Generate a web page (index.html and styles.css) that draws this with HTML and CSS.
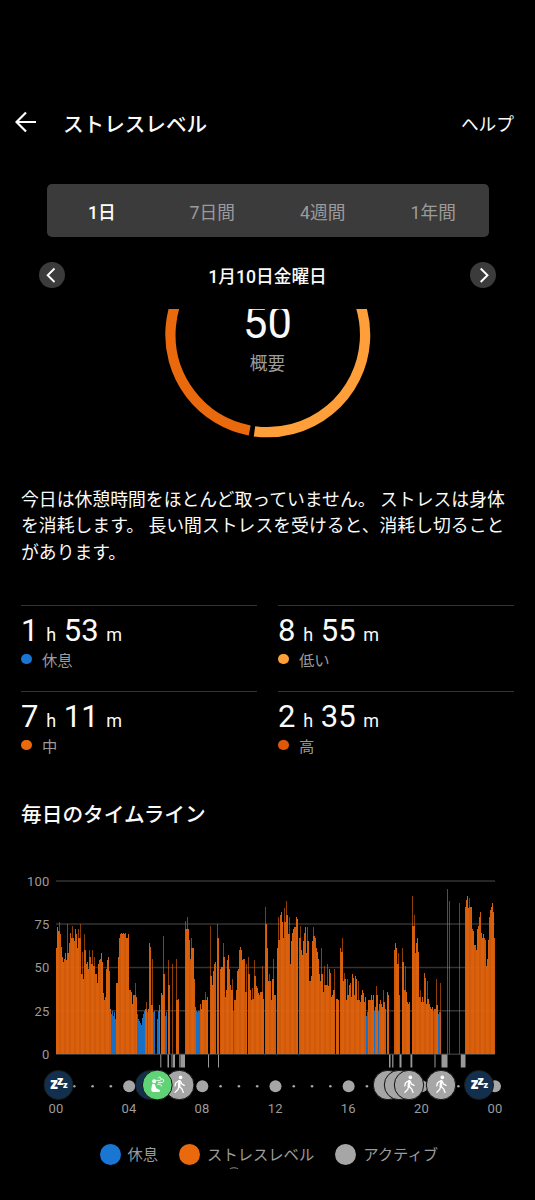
FILE: index.html
```html
<!DOCTYPE html>
<html lang="ja">
<head>
    <meta charset="UTF-8">
    <meta name="viewport" content="width=device-width, initial-scale=1.0">
    <title>ストレスレベル</title>
    <link rel="stylesheet" href="styles.css">
</head>
<body>
    <header class="topbar">
        <svg class="back" width="22" height="22" viewBox="0 0 22 22"><path d="M21 11H2M11 1.5L1.5 11L11 20.5"/></svg>
        <h1>ストレスレベル</h1>
        <a class="help">ヘルプ</a>
    </header>

    <nav class="tabs">
        <span class="tab active">1日</span>
        <span class="tab">7日間</span>
        <span class="tab">4週間</span>
        <span class="tab">1年間</span>
    </nav>

    <div class="date-row">
        <span class="arrow"><svg width="26" height="26" viewBox="0 0 26 26"><path d="M15.5 6.5L8.7 13.3L15.5 20"/></svg></span>
        <span class="date">1月10日金曜日</span>
        <span class="arrow"><svg width="26" height="26" viewBox="0 0 26 26"><path d="M10.7 6.5L17.5 13.3L10.7 20"/></svg></span>
    </div>

    <svg class="ring" width="215" height="135" viewBox="0 0 215 135">
        <path class="ring-mid" d="M89.7 121.5A97.4 97.4 0 0 1 107.5 -71.6"/>
        <path class="ring-low" d="M94.5 122.3A97.4 97.4 0 1 0 107.5 -71.6"/>
        <text class="score" x="107.5" y="29">50</text>
        <text class="score-label" x="107.5" y="60.8">概要</text>
    </svg>

    <p class="summary">今日は休憩時間をほとんど取っていません。 ストレスは身体を消耗します。 長い間ストレスを受けると、消耗し切ることがあります。</p>

    <section class="stats">
        <div class="stat">
            <div class="time">1 <small>h</small> 53 <small>m</small></div>
            <div class="label"><i class="dot rest"></i>休息</div>
        </div>
        <div class="stat">
            <div class="time">8 <small>h</small> 55 <small>m</small></div>
            <div class="label"><i class="dot low"></i>低い</div>
        </div>
        <div class="stat">
            <div class="time">7 <small>h</small> 11 <small>m</small></div>
            <div class="label"><i class="dot medium"></i>中</div>
        </div>
        <div class="stat">
            <div class="time">2 <small>h</small> 35 <small>m</small></div>
            <div class="label"><i class="dot high"></i>高</div>
        </div>
    </section>

    <h2>毎日のタイムライン</h2>

    <svg class="chart" width="535" height="250" viewBox="0 870 535 250">
        <defs>
            <g id="walk">
                <circle class="badge-active" r="14.7"/>
                <circle class="figure" cx="1.3" cy="-7.6" r="1.8"/>
                <path class="figure-line" d="M0.3 -3.6L-0.2 1.2" stroke-width="2.6"/>
                <path class="figure-line" d="M-0.4 -4.2L-3.6 -2L-4.2 0.8M1.2 -3.8L2.7 -0.8L5 0.4M-0.4 1.5L-1.2 4.2L-4.2 7.4M0.2 1.5L2.7 4L4 7.4" stroke-width="1.3"/>
            </g>
            <g id="sleep">
                <circle class="badge-sleep" r="14.5"/>
                <text class="z" x="-8.2" y="3.6" font-size="15">z</text>
                <text class="z" x="-1.4" y="0" font-size="12.5">z</text>
                <text class="z" x="4.4" y="2.6" font-size="9">z</text>
            </g>
        </defs>
        <g class="grid">
            <path d="M56 881H495M56 924H495M56 967.5H495M56 1010.7H495M56 1054.3H495"/>
        </g>
        <g class="y-labels">
            <text x="49.5" y="885.5">100</text>
            <text x="49.5" y="928.8">75</text>
            <text x="49.5" y="972.2">50</text>
            <text x="49.5" y="1015.5">25</text>
            <text x="49.5" y="1058.8">0</text>
        </g>
        <g id="bars"></g>
        <g id="activity"></g>
        <g id="ticks"></g>
        <use href="#sleep" x="58.5" y="1085"/>
        <circle class="badge-sleep" cx="150" cy="1085" r="14.5"/>
        <use href="#walk" x="179.3" y="1085"/>
        <g transform="translate(157.3 1085)">
            <circle class="badge-breath" r="14.9"/>
            <circle class="figure" cx="-3.2" cy="-3.8" r="2"/>
            <path class="figure" d="M-5.2 -0.8Q-3.4 -2 -2.2 0L-1 3.2L2.6 5Q3.4 6.8 1.6 7H-4.5Q-6.3 6.6 -6 4Z"/>
            <path class="figure-line" d="M-0.6 -4.6H2.6Q4.6 -5.2 3.6 -7.2Q2.2 -8.6 1 -7.2M1 -2.6H5.2Q7 -3.2 6.4 -5.2Q5.6 -6.4 4.6 -5.6M0.4 -0.7H3.2Q4.6 -0.2 4 1.2" stroke-width="0.9"/>
        </g>
        <circle class="badge-active" cx="388" cy="1085" r="14.7"/>
        <circle class="badge-active" cx="399" cy="1085" r="14.7"/>
        <use href="#walk" x="409" y="1085"/>
        <use href="#walk" x="441" y="1085"/>
        <use href="#sleep" x="479" y="1085"/>
        <g class="x-labels">
            <text x="56" y="1113">00</text>
            <text x="129" y="1113">04</text>
            <text x="202" y="1113">08</text>
            <text x="275.3" y="1113">12</text>
            <text x="348.3" y="1113">16</text>
            <text x="421.5" y="1113">20</text>
            <text x="495" y="1113">00</text>
        </g>
    </svg>

    <div class="legend">
        <span class="key"><i class="swatch rest"></i>休息</span>
        <span class="key"><i class="swatch medium"></i>ストレスレベル</span>
        <span class="key"><i class="swatch active-time"></i>アクティブ</span>
    </div>
    <svg class="next-ring" width="20" height="2" viewBox="0 0 20 2"><circle cx="10" cy="8" r="7.3"/></svg>

    <script src="chart.js"></script>
</body>
</html>
```
FILE: styles.css
```css
* {
    box-sizing: border-box;
}
body {
    margin: 0;
    padding: 104px 0 0;
    width: 535px;
    height: 1200px;
    overflow: hidden;
    background-color: #000;
    color: #fafafa;
    font-family: Roboto, "Noto Sans CJK JP", sans-serif;
    font-size: 17.7px;
}
svg {
    display: block;
}
.topbar {
    display: flex;
    align-items: center;
    height: 38px;
    padding: 0 21px 0 15px;
}
.back, .arrow path {
    fill: none;
    stroke: #fff;
    stroke-width: 2.2;
}
.back {
    margin-top: -3px;
}
.topbar h1 {
    flex: 1;
    margin: 0 0 0 26px;
    padding-top: 3px;
    font-size: 20.6px;
    font-weight: 500;
    line-height: 38px;
}
.tabs {
    display: flex;
    width: 442px;
    height: 53px;
    margin: 42px 0 0 46.5px;
    border-radius: 5px;
    background-color: #3b3b3b;
}
.tab {
    flex: 1;
    text-align: center;
    line-height: 58px;
    color: #9b9b9b;
}
.tab.active {
    color: #fff;
    font-weight: 500;
}
.date-row {
    display: flex;
    justify-content: space-between;
    align-items: center;
    height: 30px;
    margin-top: 23px;
    padding: 0 38.5px;
}
.arrow {
    border-radius: 50%;
    background-color: #3b3b3b;
}
.arrow path {
    stroke-width: 1.9;
}
.date {
    font-weight: 500;
    line-height: 30px;
    padding-top: 4px;
}
.ring {
    margin: 19px 0 0 160px;
    overflow: hidden;
}
.ring path {
    fill: none;
    stroke-width: 10.3;
}
.ring-mid {
    stroke: #eb690d;
}
.ring-low {
    stroke: #ff9f3a;
}
.score {
    fill: #fafafa;
    font-size: 43.5px;
    text-anchor: middle;
}
.score-label {
    fill: #9b9b9b;
    text-anchor: middle;
}
.summary {
    margin: 43px 20px 0 21px;
    font-size: 17.83px;
    line-height: 26.4px;
}
.stats {
    display: grid;
    grid-template-columns: 236px 236px;
    column-gap: 21px;
    margin: 38.8px 21px 0;
}
.stat {
    height: 86px;
    border-top: 1.5px solid #333;
}
.time {
    height: 42px;
    font-size: 31px;
    line-height: 49px;
}
.time small {
    font-size: 18px;
}
.label {
    display: flex;
    align-items: center;
    height: 22px;
    font-size: 15.3px;
    color: #9b9b9b;
}
.dot {
    width: 10.5px;
    height: 10.5px;
    margin: 0 10.5px 0 0;
    border-radius: 50%;
}
.rest {
    background-color: #1976d3;
}
.low {
    background-color: #ff9f3a;
}
.medium {
    background-color: #eb690d;
}
.high {
    background-color: #df5808;
}
.active-time {
    background-color: #a6a6a6;
}
h2 {
    margin: 23px 21px 0;
    font-size: 20.7px;
    font-weight: 500;
    line-height: 30px;
}
.chart {
    margin-top: 40.2px;
}
.grid path {
    stroke: #333;
    stroke-width: 1.4;
}
.chart text {
    fill: #9b9b9b;
}
.y-labels, .x-labels {
    font-size: 13px;
    letter-spacing: 0.2px;
}
.y-labels {
    text-anchor: end;
}
.x-labels {
    text-anchor: middle;
}
#bars {
    opacity: 0.94;
    shape-rendering: crispEdges;
}
.bar-stress {
    fill: #e8660d;
}
.bar-stress.alt {
    fill: #dc600c;
}
.bar-rest {
    fill: #1976d3;
}
.spike {
    opacity: 0.65;
}
#activity rect {
    fill: #999;
}
#ticks circle {
    fill: #a6a6a6;
}
.badge-active {
    fill: #a6a6a6;
    stroke: #111;
}
.badge-sleep {
    fill: #12304d;
    stroke: #1b1b1b;
}
.badge-breath {
    fill: #60d377;
    stroke: #111;
}
.figure {
    fill: #fff;
}
.figure-line {
    fill: none;
    stroke: #fff;
    stroke-linecap: round;
    stroke-linejoin: round;
}
.chart .z {
    fill: #fff;
    font-family: "Open Sans", sans-serif;
    font-weight: 800;
}
.legend {
    display: flex;
    gap: 21px;
    height: 24px;
    margin: 22.5px 0 0 99.5px;
    font-size: 15.3px;
    line-height: 24px;
    color: #9b9b9b;
}
.key {
    display: flex;
    align-items: center;
}
.swatch {
    width: 21px;
    height: 21px;
    margin-right: 7px;
    border-radius: 50%;
}
.next-ring {
    margin: 0 0 0 224px;
}
.next-ring circle {
    fill: none;
    stroke: #8a8a8a;
}
```
FILE: chart.js
```js
const SVG_NS = 'http://www.w3.org/2000/svg';
const LEFT = 56;
const BASE = 1054;
const SCALE = 1.733;

// stress score over the day, 0 = no reading, 25 and below = rest
const levels = [
    61, 73, 71, 76,
    69, 62, 56, 53, 55, 58, 54, 75, 58, 64,
    70, 67, 74, 67, 65, 72, 69, 61, 72, 67,
    75, 46, 59, 43, 69, 60, 52, 53, 49, 60,
    56, 52, 60, 51, 56, 46, 46, 41, 52, 54,
    55, 58, 53, 35, 31, 33, 49, 54, 56, 48,
    26, 23, 25, 22, 24, 20, 41, 41, 56, 67,
    69, 70, 69, 70, 69, 70, 67, 67, 69, 37,
    37, 36, 29, 34, 34, 41, 33, 23, 20, 19,
    18, 17, 21, 23, 25, 26, 30, 24, 26, 64,
    62, 28, 55, 24, 25, 0, 0, 20, 25, 28,
    0, 35, 34, 68, 46, 22, 24, 0, 54, 40,
    0, 0, 52, 0, 0, 0, 55, 31, 32, 0,
    0, 0, 0, 0, 0, 77, 72, 79, 72, 66,
    55, 67, 61, 61, 43, 27, 25, 24, 25, 25,
    29, 26, 31, 31, 31, 36, 31, 33, 0, 0,
    74, 45, 40, 48, 52, 53, 0, 75, 67, 0,
    49, 50, 50, 64, 56, 33, 37, 54, 57, 49,
    40, 37, 43, 25, 31, 31, 37, 48, 49, 60,
    62, 60, 54, 55, 55, 36, 52, 0, 56, 46,
    37, 31, 38, 32, 54, 45, 39, 38, 35, 34,
    36, 36, 51, 32, 0, 85, 75, 61, 42, 46,
    42, 31, 43, 55, 34, 34, 0, 61, 79, 66,
    80, 82, 76, 67, 84, 76, 88, 80, 69, 79,
    52, 65, 70, 72, 73, 73, 79, 78, 0, 67,
    74, 60, 57, 65, 70, 73, 58, 73, 65, 42,
    42, 45, 65, 73, 68, 67, 61, 59, 55, 46,
    42, 61, 46, 36, 51, 40, 40, 52, 39, 49,
    47, 33, 34, 37, 49, 0, 32, 32, 31, 0,
    61, 59, 67, 42, 47, 43, 31, 43, 34, 40,
    41, 33, 46, 44, 34, 45, 43, 31, 42, 31,
    30, 34, 37, 35, 30, 33, 22, 24, 31, 31,
    31, 34, 31, 34, 25, 27, 39, 34, 25, 29,
    31, 29, 27, 37, 30, 26, 0, 36, 34, 0,
    0, 0, 0, 0, 60, 64, 61, 52, 58, 34,
    0, 0, 61, 53, 37, 51, 36, 30, 29, 30,
    0, 0, 91, 74, 80, 58, 64, 67, 59, 33,
    37, 30, 33, 30, 47, 44, 29, 42, 32, 29,
    27, 26, 27, 25, 26, 26, 43, 28, 23, 24,
    41, 0, 0, 0, 0, 0, 0, 95, 0, 88,
    0, 0, 0, 0, 0, 0, 0, 0, 0, 87,
    0, 0, 0, 0, 0, 85, 89, 91, 84, 90,
    85, 85, 72, 71, 63, 63, 60, 72, 74, 79,
    82, 70, 67, 69, 67, 66, 51, 55, 66, 79,
    83, 85, 87, 82, 67
];

// [x, width] of the active periods hanging under the axis
const activity = [
    [160.3, 1], [167.5, 1.5], [171.5, 1], [173, 2], [179.3, 1], [180.5, 4.5],
    [208, 1], [218, 1], [389, 1.5], [392.2, 1.2], [399.5, 2], [410.5, 1.8],
    [434.5, 1], [441.5, 6], [460.8, 4.7]
];

function add(parent, tag, attrs) {
    const el = document.createElementNS(SVG_NS, tag);
    for (const key in attrs) {
        el.setAttribute(key, attrs[key]);
    }
    document.getElementById(parent).appendChild(el);
}

function drawBar(x, from, to, cls) {
    add('bars', 'rect', {
        x: x,
        y: BASE - to * SCALE,
        width: 1,
        height: (to - from) * SCALE,
        class: cls
    });
}

levels.forEach((value, i) => {
    if (!value) return;
    const x = LEFT + i;
    let cls = value <= 25 ? 'bar-rest' : 'bar-stress';
    if (i % 5 > 2) cls += ' alt';
    // narrow peaks fade out above their neighbours
    const side = Math.max(levels[i - 1] || 0, levels[i + 1] || 0);
    if (value > side + 3) {
        drawBar(x, 0, side, cls);
        drawBar(x, side, value, cls + ' spike');
    } else {
        drawBar(x, 0, value, cls);
    }
});

activity.forEach(([x, width]) => {
    add('activity', 'rect', { x: x, y: 1054.5, width: width, height: 13 });
});

// one tick per hour, a big one every four hours
for (let hour = 0; hour <= 24; hour++) {
    add('ticks', 'circle', {
        cx: 56 + hour * 18.29,
        cy: 1086.3,
        r: hour % 4 === 0 ? 6 : 1.3
    });
}
```
